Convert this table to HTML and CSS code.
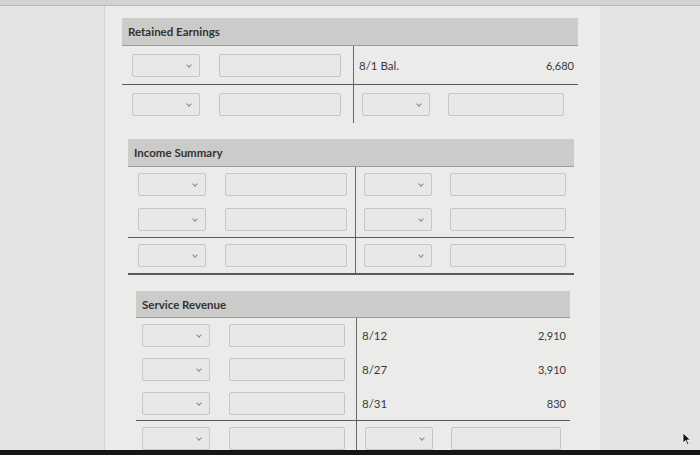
FILE: index.html
```html
<!DOCTYPE html>
<html>
<head>
<meta charset="utf-8">
<link rel="stylesheet" href="styles.css">
</head>
<body>
<div class="topstrip"></div>
<div class="page">
  <div class="panel">

    <section class="acct re">
      <div class="acct-head">Retained Earnings</div>
      <div class="taccount">
        <div class="row">
          <div class="cell left"><span class="sel"></span><span class="inp"></span></div>
          <div class="cell right"><span class="date">8/1 Bal.</span><span class="amt">6,680</span></div>
        </div>
        <div class="row ruled">
          <div class="cell left"><span class="sel"></span><span class="inp"></span></div>
          <div class="cell right"><span class="sel"></span><span class="inp"></span></div>
        </div>
      </div>
    </section>

    <section class="acct is">
      <div class="acct-head">Income Summary</div>
      <div class="taccount">
        <div class="row">
          <div class="cell left"><span class="sel"></span><span class="inp"></span></div>
          <div class="cell right"><span class="sel"></span><span class="inp"></span></div>
        </div>
        <div class="row">
          <div class="cell left"><span class="sel"></span><span class="inp"></span></div>
          <div class="cell right"><span class="sel"></span><span class="inp"></span></div>
        </div>
        <div class="row ruled closed">
          <div class="cell left"><span class="sel"></span><span class="inp"></span></div>
          <div class="cell right"><span class="sel"></span><span class="inp"></span></div>
        </div>
      </div>
    </section>

    <section class="acct sr">
      <div class="acct-head">Service Revenue</div>
      <div class="taccount">
        <div class="row">
          <div class="cell left"><span class="sel"></span><span class="inp"></span></div>
          <div class="cell right"><span class="date">8/12</span><span class="amt">2,910</span></div>
        </div>
        <div class="row">
          <div class="cell left"><span class="sel"></span><span class="inp"></span></div>
          <div class="cell right"><span class="date">8/27</span><span class="amt">3,910</span></div>
        </div>
        <div class="row">
          <div class="cell left"><span class="sel"></span><span class="inp"></span></div>
          <div class="cell right"><span class="date">8/31</span><span class="amt">830</span></div>
        </div>
        <div class="row ruled">
          <div class="cell left"><span class="sel"></span><span class="inp"></span></div>
          <div class="cell right"><span class="sel"></span><span class="inp"></span></div>
        </div>
      </div>
    </section>

  </div>
</div>
<svg class="cursor" width="10" height="14" viewBox="0 0 10 14"><path d="M1 1 L1 11 L3.5 8.5 L5.5 13 L7 12.3 L5 8 L8.5 8 Z" fill="#111" stroke="#fff" stroke-width="0.8"/></svg>
<div class="bezel"></div>
</body>
</html>
```

FILE: styles.css
```css
html, body {
  margin: 0;
  padding: 0;
  height: 455px;
  overflow: hidden;
}
body {
  background: #e3e3e1;
  font-family: Lato, "Open Sans", Arial, sans-serif;
  color: #3a3a3a;
  position: relative;
}
.topstrip {
  height: 5px;
  background: #d3d3d1;
  border-bottom: 1px solid #b9b9b7;
}
.page {
  display: flex;
}
.panel {
  margin-left: 104px;
  width: 448px;
  padding: 12px 24px 0 23px;
  background: #ebebe9;
  border-left: 1px solid #d2d2d0;
  display: flex;
  flex-direction: column;
  gap: 16px;
  height: 460px;
}
.re {
  margin: 0 -2px 0 -6px;
}
.is {
  margin: 0 2px 0 0;
}
.sr {
  margin: 0 6px 0 8px;
}
.acct-head {
  height: 27px;
  background: #cbcbc9;
  border-bottom: 1px solid #9c9c9a;
  display: flex;
  align-items: center;
  padding-left: 6px;
  font-size: 11.5px;
  font-weight: 700;
  color: #333;
}
.sr .acct-head {
  height: 26px;
}
.taccount {
  display: flex;
  flex-direction: column;
}
.row {
  display: grid;
  grid-template-columns: 228px 1fr;
  height: 35px;
}
.re .row {
  height: 38px;
  grid-template-columns: 232px 1fr;
}
.sr .row {
  height: 34px;
  grid-template-columns: 221px 1fr;
}
.row.ruled {
  border-top: 1px solid #5a5a58;
}
.row.closed {
  border-bottom: 2px solid #5a5a58;
}
.cell {
  display: flex;
  align-items: center;
}
.cell.left {
  padding-left: 10px;
  gap: 19px;
  border-right: 1px solid #6a6a68;
}
.sr .cell.left {
  padding-left: 6px;
}
.cell.right {
  padding-left: 8px;
  padding-right: 10px;
  gap: 18px;
}
.sel {
  width: 68px;
  height: 23px;
  box-sizing: border-box;
  border: 1px solid #c6c6c4;
  border-radius: 2px;
  background: #e8e8e6;
  position: relative;
  flex: none;
}
.sel::after {
  content: "";
  position: absolute;
  right: 8px;
  top: 8px;
  width: 3px;
  height: 3px;
  border-right: 1px solid #8a8a88;
  border-bottom: 1px solid #8a8a88;
  transform: rotate(45deg);
}
.left .inp {
  width: 122px;
}
.sr .left .inp {
  width: 116px;
}
.right .inp {
  width: 116px;
}
.sr .right .inp {
  width: 110px;
}
.inp {
  height: 23px;
  box-sizing: border-box;
  border: 1px solid #c6c6c4;
  border-radius: 2px;
  background: #e8e8e6;
  flex: none;
}
.date {
  font-size: 11.5px;
  color: #3a3a3a;
  margin-left: -3px;
}
.amt {
  margin-left: auto;
  font-size: 11px;
  color: #3a3a3a;
  margin-right: -6px;
}
.cursor {
  position: absolute;
  left: 682px;
  top: 432px;
}
.bezel {
  position: absolute;
  left: 0;
  right: 0;
  bottom: 0;
  height: 5px;
  background: #161616;
}
```
